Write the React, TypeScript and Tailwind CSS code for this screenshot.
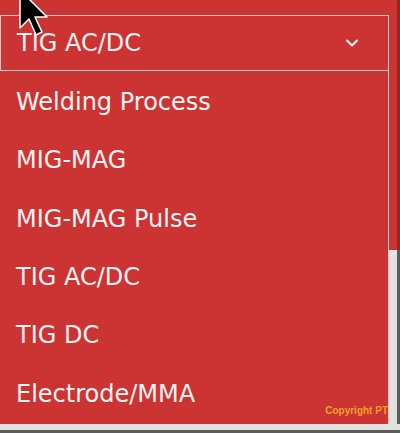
import { ChevronDown } from "lucide-react";

const processes = [
  "Welding Process",
  "MIG-MAG",
  "MIG-MAG Pulse",
  "TIG AC/DC",
  "TIG DC",
  "Electrode/MMA",
];

export default function App() {
  return (
    <div className="relative w-[400px] h-[433px] overflow-hidden bg-[#cc3333] flex flex-col font-['DejaVu_Sans',Verdana,sans-serif] text-[#fff3f3]">
      <div className="flex flex-1">
        <div className="w-[389px] flex flex-col">
          <div className="h-[15px]" />
          <div className="h-[56px] border border-[#f2c4c4] flex items-center justify-between pl-4 pr-[26px] text-[24px]">
            <span>TIG AC/DC</span>
            <ChevronDown className="w-[20px] h-[20px]" strokeWidth={2.5} />
          </div>
          <ul className="flex-1 border-r border-[#f2c4c4] flex flex-col pt-[2px]">
            {processes.map((p) => (
              <li key={p} className="h-[58.3px] flex items-center pl-4 text-[24px]">
                {p}
              </li>
            ))}
          </ul>
        </div>
        <div className="flex-1 flex flex-col">
          <div className="h-[250px] border-r-[3px] border-[#9c2222]" />
          <div className="flex-1 bg-[#e2e2de] border-r-[3px] border-[#5c5c5c]" />
        </div>
      </div>
      <div className="h-[9px] bg-[#e2e2de] border-b-[3px] border-[#5c5c5c]" />

      <span className="absolute right-[12px] bottom-[15px] text-[10px] font-bold font-['Liberation_Sans',Arial,sans-serif] text-[#eea22a]">
        Copyright PT
      </span>

      <svg
        className="absolute left-[18px] top-[-11px]"
        width="34"
        height="50"
        viewBox="0 0 34 50"
      >
        <path
          d="M2 1 L2 39 L11 30 L18 46 L24 43 L17 28 L29 28 Z"
          fill="#000"
          stroke="#fff"
          strokeWidth="1.5"
          strokeLinejoin="round"
        />
      </svg>
    </div>
  );
}
